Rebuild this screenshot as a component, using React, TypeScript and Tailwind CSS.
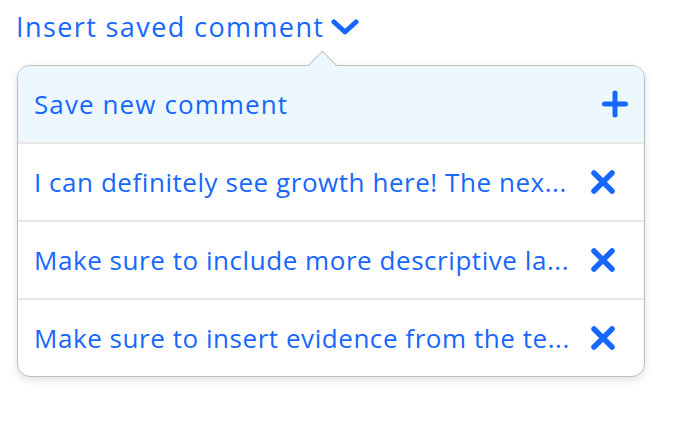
import React from 'react';

const comments = [
  "I can definitely see growth here! The nex...",
  "Make sure to include more descriptive la...",
  "Make sure to insert evidence from the te...",
];

function XIcon() {
  return (
    <svg width="26" height="26" viewBox="0 0 26 26" fill="none">
      <path d="M4 4L22 22M22 4L4 22" stroke="#1767ff" strokeWidth="5.5" strokeLinecap="round" />
    </svg>
  );
}

function PlusIcon() {
  return (
    <svg width="26" height="28" viewBox="0 0 26 28" fill="none">
      <path d="M13 3V25M2.5 14H23.5" stroke="#1767ff" strokeWidth="5" strokeLinecap="round" />
    </svg>
  );
}

function Chevron() {
  return (
    <svg width="28" height="18" viewBox="0 0 28 18" fill="none">
      <path d="M3 4L14 14L25 4" stroke="#1767ff" strokeWidth="5" strokeLinecap="round" strokeLinejoin="round" />
    </svg>
  );
}

export default function App() {
  return (
    <div className="w-[678px] h-[422px] bg-white pl-[17px] pt-[10px] font-['Open_Sans',sans-serif] text-[#1767ff]">
      <button className="flex items-center gap-[7px] ml-[-1px] text-[27px] tracking-[1.4px] leading-[34px]">
        Insert saved comment
        <Chevron />
      </button>
      <div className="relative mt-[21px] w-[628px]">
        <div className="absolute left-[295px] top-[-10px] w-[21px] h-[21px] rotate-45 bg-[#edf7fe] border-l-[1.5px] border-t-[1.5px] border-[#bdbdbd] z-10" />
        <div className="rounded-[13px] border-[1.5px] border-[#bdbdbd] bg-white shadow-[0_3px_8px_rgba(0,0,0,0.12)] overflow-hidden">
          <div className="flex items-center justify-between h-[78px] pl-4 pr-[16px] bg-[#edf7fe] border-b-2 border-[#e8e8e8]">
            <span className="text-[26px] tracking-[1.1px]">Save new comment</span>
            <PlusIcon />
          </div>
          {comments.map((c, i) => (
            <div
              key={i}
              className={`flex items-center gap-4 pl-4 pr-[28px] ${i < comments.length - 1 ? 'h-[78px] border-b-2 border-[#e8e8e8]' : 'h-[76px]'}`}
            >
              <span className="flex-1 min-w-0 truncate text-[26px] tracking-[0.55px]">{c}</span>
              <XIcon />
            </div>
          ))}
        </div>
      </div>
    </div>
  );
}
